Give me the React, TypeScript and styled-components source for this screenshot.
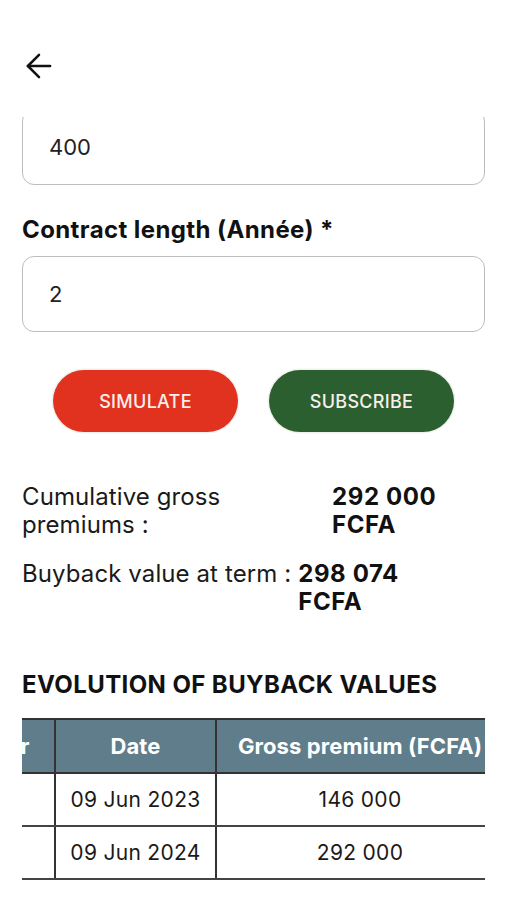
import React, { useLayoutEffect, useRef } from 'react';
import styled, { createGlobalStyle } from 'styled-components';
import { ArrowLeft } from 'lucide-react';

const GlobalStyle = createGlobalStyle`
  html, body {
    margin: 0;
    padding: 0;
    background: #ffffff;
  }
  body {
    font-family: Inter, 'Liberation Sans', sans-serif;
    color: #111111;
  }
`;

type Row = { year: number; date: string; gross: string; buyback: string };

const rows: Row[] = [
  { year: 1, date: '09 Jun 2023', gross: '146 000', buyback: '148 512' },
  { year: 2, date: '09 Jun 2024', gross: '292 000', buyback: '298 074' },
];

const YEAR_COL = 100;
const YEAR_VISIBLE = 32;

export default function App() {
  const scrollRef = useRef<HTMLDivElement>(null);
  const premiumRef = useRef<HTMLInputElement>(null);
  const tableRef = useRef<HTMLDivElement>(null);

  useLayoutEffect(() => {
    // form is shown scrolled: the daily premium field sits partly under the top bar
    if (scrollRef.current && premiumRef.current) {
      scrollRef.current.scrollTop = premiumRef.current.offsetTop + 8;
    }
    if (tableRef.current) {
      tableRef.current.scrollLeft = YEAR_COL - YEAR_VISIBLE;
    }
  }, []);

  return (
    <>
      <GlobalStyle />
      <Screen>
        <TopBar>
          <BackButton aria-label="back">
            <ArrowLeft size={38} strokeWidth={1.6} color="#111" />
          </BackButton>
        </TopBar>
        <ScrollArea ref={scrollRef}>
          <Content>
            <FieldLabel>Daily premium (FCFA) *</FieldLabel>
            <Field ref={premiumRef} defaultValue="400" readOnly />
            <FieldLabel>Contract length (Année) *</FieldLabel>
            <Field defaultValue="2" readOnly />

            <ButtonRow>
              <ActionButton $variant="simulate">SIMULATE</ActionButton>
              <ActionButton $variant="subscribe">SUBSCRIBE</ActionButton>
            </ButtonRow>

            <Results>
              <ResultRow>
                <ResultLabel>Cumulative gross premiums :</ResultLabel>
                <ResultValue>292 000 FCFA</ResultValue>
              </ResultRow>
              <ResultRow>
                <ResultLabel>Buyback value at term :</ResultLabel>
                <ResultValue>298 074 FCFA</ResultValue>
              </ResultRow>
            </Results>

            <SectionTitle>EVOLUTION OF BUYBACK VALUES</SectionTitle>
            <TableViewport ref={tableRef}>
              <Table>
                <colgroup>
                  <col style={{ width: YEAR_COL }} />
                  <col style={{ width: 161 }} />
                  <col style={{ width: 288 }} />
                  <col style={{ width: 288 }} />
                </colgroup>
                <thead>
                  <tr>
                    <HeadCell>Year</HeadCell>
                    <HeadCell>Date</HeadCell>
                    <HeadCell>Gross premium (FCFA)</HeadCell>
                    <HeadCell>Buyback value (FCFA)</HeadCell>
                  </tr>
                </thead>
                <tbody>
                  {rows.map((r) => (
                    <tr key={r.year}>
                      <BodyCell>{r.year}</BodyCell>
                      <BodyCell>{r.date}</BodyCell>
                      <BodyCell>{r.gross}</BodyCell>
                      <BodyCell>{r.buyback}</BodyCell>
                    </tr>
                  ))}
                </tbody>
              </Table>
            </TableViewport>
          </Content>
        </ScrollArea>
      </Screen>
    </>
  );
}

const Screen = styled.div`
  display: flex;
  flex-direction: column;
  width: 507px;
  height: 900px;
  overflow: hidden;
  background: #ffffff;
`;

const TopBar = styled.header`
  flex: 0 0 117px;
  display: flex;
  align-items: flex-start;
  padding: 47px 0 0 20px;
  box-sizing: border-box;
`;

const BackButton = styled.button`
  display: flex;
  padding: 0;
  border: none;
  background: none;
  cursor: pointer;
`;

const ScrollArea = styled.div`
  position: relative;
  flex: 1 1 auto;
  overflow-y: auto;
  scrollbar-width: none;
  &::-webkit-scrollbar {
    display: none;
  }
`;

const Content = styled.div`
  display: flex;
  flex-direction: column;
  padding: 20px 22px 80px;
`;

const FieldLabel = styled.label`
  font-size: 24px;
  font-weight: 700;
  letter-spacing: 0.4px;
  line-height: 28px;
  margin: 31px 0 12px;
  color: #111;
  &:first-child {
    margin-top: 0;
  }
`;

const Field = styled.input`
  height: 76px;
  box-sizing: border-box;
  border: 1.5px solid #bdbdbd;
  border-radius: 12px;
  padding: 0 26px;
  font-family: inherit;
  font-size: 22px;
  color: #222;
  background: #fff;
  outline: none;
`;

const ButtonRow = styled.div`
  display: flex;
  justify-content: center;
  gap: 31px;
  margin-top: 38px;
`;

const ActionButton = styled.button<{ $variant: 'simulate' | 'subscribe' }>`
  width: 185px;
  height: 62px;
  border-radius: 31px;
  border: none;
  box-shadow: 0 0 0 1.5px #f1f1ee;
  background: ${(p) => (p.$variant === 'simulate' ? '#e1321f' : '#2c5f2f')};
  color: #f8eeea;
  font-family: inherit;
  font-size: 18px;
  font-weight: 500;
  letter-spacing: 0.3px;
`;

const Results = styled.div`
  display: flex;
  flex-direction: column;
  gap: 21px;
  margin-top: 51px;
`;

const ResultRow = styled.div`
  display: flex;
  gap: 7px;
  line-height: 28px;
`;

const ResultLabel = styled.span`
  flex: 0 1 auto;
  font-size: 24px;
  letter-spacing: 0.1px;
  color: #1a1a1a;
`;

const ResultValue = styled.span`
  flex: 0 0 153px;
  font-size: 24px;
  font-weight: 700;
  letter-spacing: 0.6px;
  color: #111;
`;

const SectionTitle = styled.h2`
  margin: 55px 0 19px;
  font-size: 24px;
  letter-spacing: 0.4px;
  line-height: 28px;
  font-weight: 700;
  color: #111;
`;

const TableViewport = styled.div`
  overflow-x: auto;
  scrollbar-width: none;
  &::-webkit-scrollbar {
    display: none;
  }
`;

const Table = styled.table`
  border-collapse: collapse;
  table-layout: fixed;
  width: ${YEAR_COL + 161 + 288 + 288}px;
`;

const HeadCell = styled.th`
  height: 52px;
  padding: 0 6px;
  background: #607d8b;
  color: #ffffff;
  font-size: 22px;
  font-weight: 700;
  letter-spacing: 0.1px;
  text-align: center;
  border: 2px solid #333;
  white-space: nowrap;
`;

const BodyCell = styled.td`
  height: 51px;
  padding: 0 8px;
  font-size: 21px;
  letter-spacing: 0.3px;
  color: #1a1a1a;
  text-align: center;
  border: 2px solid #333;
  border-top: none;
  border-bottom-color: #444;
  white-space: nowrap;
`;
